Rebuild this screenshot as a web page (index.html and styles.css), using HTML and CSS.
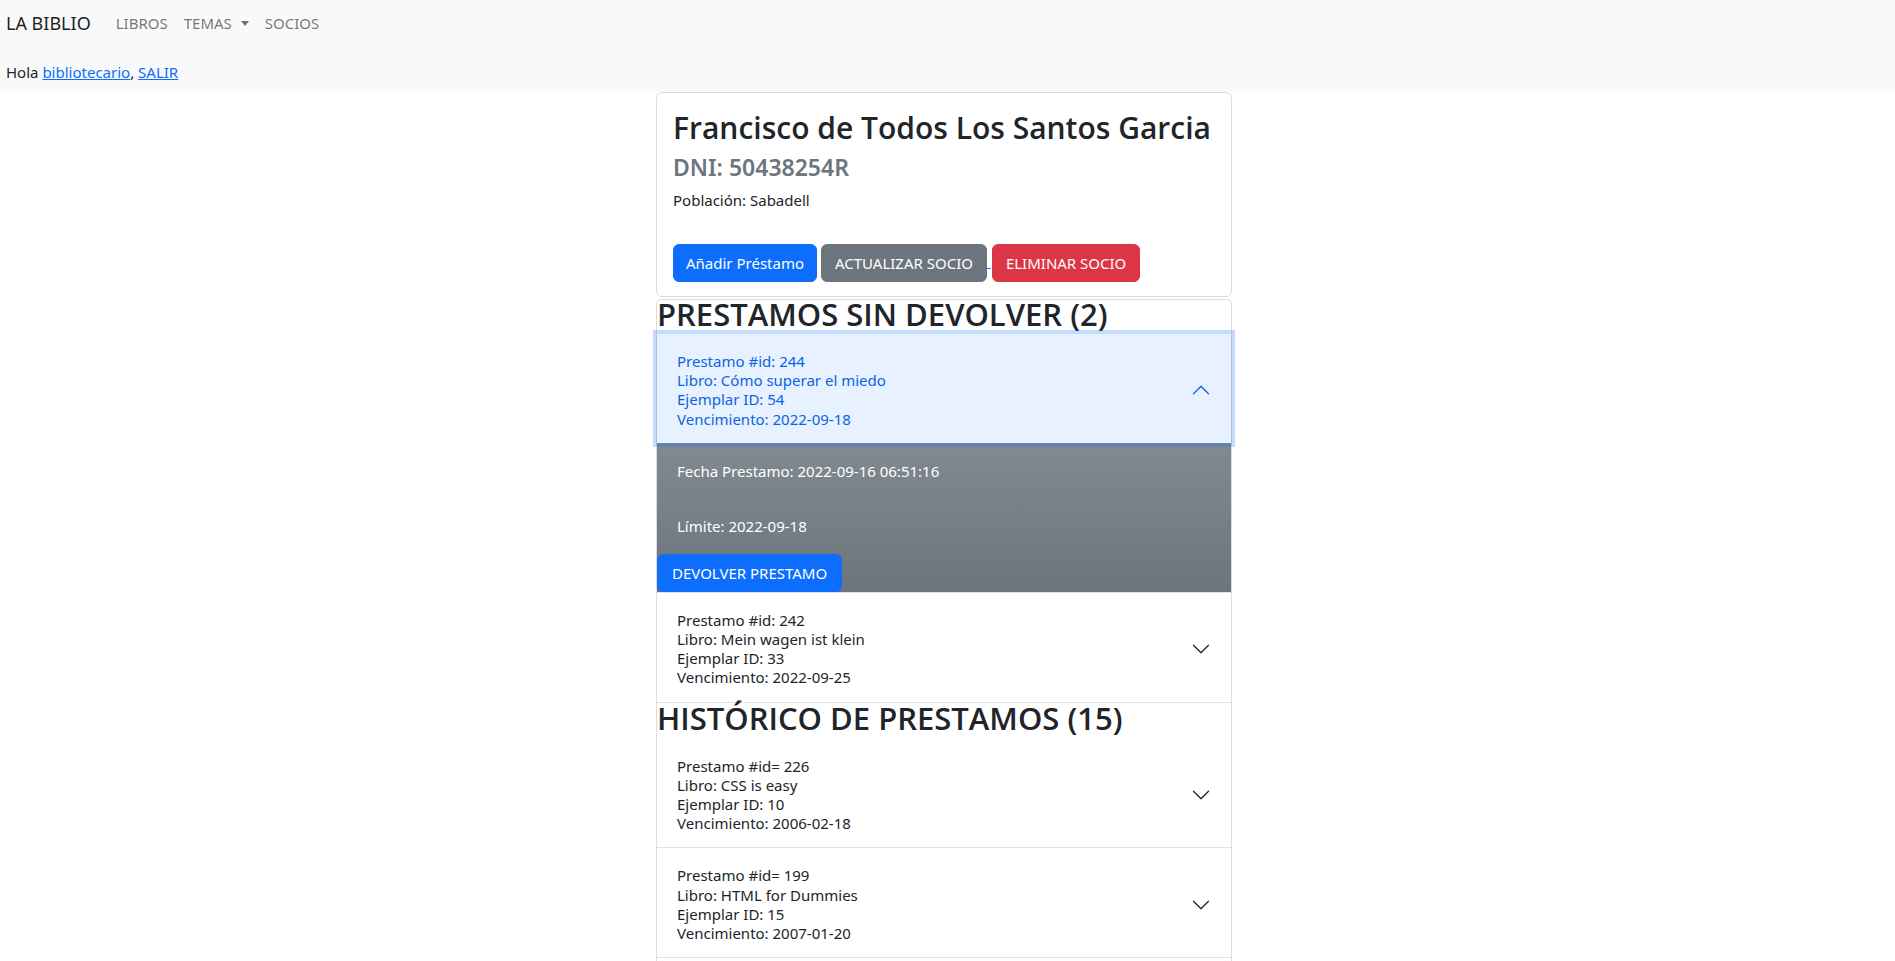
FILE: index.html
```html
<!DOCTYPE html>
<html lang="es">
<head>
<meta charset="utf-8">
<title>La Biblio - Socio</title>
<link rel="stylesheet" href="styles.css">
</head>
<body>
<header class="navbar">
  <div class="nav-row">
    <a class="brand" href="#">LA BIBLIO</a>
    <ul class="nav-links">
      <li><a class="nav-link" href="#">Libros</a></li>
      <li><a class="nav-link dropdown-toggle" href="#">Temas</a></li>
      <li><a class="nav-link" href="#">Socios</a></li>
    </ul>
  </div>
  <div class="greeting">Hola <a href="#">bibliotecario</a>, <a href="#">SALIR</a></div>
</header>

<main class="page">
  <div class="column">
    <section class="card">
      <h2 class="card-title">Francisco de Todos Los Santos Garcia</h2>
      <h4 class="card-subtitle">DNI: 50438254R</h4>
      <p class="card-text">Población: Sabadell</p>
      <div class="actions"><a class="btn btn-primary" href="#">Añadir Préstamo</a> <a class="btn-link" href="#"><span class="btn btn-secondary">ACTUALIZAR SOCIO</span> </a><a class="btn btn-danger" href="#">ELIMINAR SOCIO</a></div>
    </section>

    <section class="loans">
      <h3 class="section-title">PRESTAMOS SIN DEVOLVER (2)</h3>
      <div class="accordion">
        <div class="acc-item">
          <button class="acc-button expanded">
            <span class="acc-text">Prestamo #id: 244<br>Libro: Cómo superar el miedo<br>Ejemplar ID: 54<br>Vencimiento: 2022-09-18</span>
            <svg class="chev" viewBox="0 0 16 16"><path fill-rule="evenodd" d="M1.646 4.646a.5.5 0 0 1 .708 0L8 10.293l5.646-5.647a.5.5 0 0 1 .708.708l-6 6a.5.5 0 0 1-.708 0l-6-6a.5.5 0 0 1 0-.708z"/></svg>
          </button>
          <div class="acc-collapse">
            <div class="acc-body">
              <p class="detail first">Fecha Prestamo: 2022-09-16 06:51:16</p>
              <p class="detail">Límite: 2022-09-18</p>
            </div>
            <a class="btn btn-primary btn-return" href="#">DEVOLVER PRESTAMO</a>
          </div>
        </div>
        <div class="acc-item">
          <button class="acc-button">
            <span class="acc-text">Prestamo #id: 242<br>Libro: Mein wagen ist klein<br>Ejemplar ID: 33<br>Vencimiento: 2022-09-25</span>
            <svg class="chev" viewBox="0 0 16 16"><path fill-rule="evenodd" d="M1.646 4.646a.5.5 0 0 1 .708 0L8 10.293l5.646-5.647a.5.5 0 0 1 .708.708l-6 6a.5.5 0 0 1-.708 0l-6-6a.5.5 0 0 1 0-.708z"/></svg>
          </button>
        </div>
      </div>

      <h3 class="section-title history">HISTÓRICO DE PRESTAMOS (15)</h3>
      <div class="accordion">
        <div class="acc-item">
          <button class="acc-button">
            <span class="acc-text">Prestamo #id= 226<br>Libro: CSS is easy<br>Ejemplar ID: 10<br>Vencimiento: 2006-02-18</span>
            <svg class="chev" viewBox="0 0 16 16"><path fill-rule="evenodd" d="M1.646 4.646a.5.5 0 0 1 .708 0L8 10.293l5.646-5.647a.5.5 0 0 1 .708.708l-6 6a.5.5 0 0 1-.708 0l-6-6a.5.5 0 0 1 0-.708z"/></svg>
          </button>
        </div>
        <div class="acc-item">
          <button class="acc-button">
            <span class="acc-text">Prestamo #id= 199<br>Libro: HTML for Dummies<br>Ejemplar ID: 15<br>Vencimiento: 2007-01-20</span>
            <svg class="chev" viewBox="0 0 16 16"><path fill-rule="evenodd" d="M1.646 4.646a.5.5 0 0 1 .708 0L8 10.293l5.646-5.647a.5.5 0 0 1 .708.708l-6 6a.5.5 0 0 1-.708 0l-6-6a.5.5 0 0 1 0-.708z"/></svg>
          </button>
        </div>
      </div>
    </section>
  </div>
</main>
</body>
</html>
```
FILE: styles.css
```css
* { box-sizing: border-box; }

html, body {
  margin: 0;
  padding: 0;
  background: #fff;
}

body {
  font-family: "Noto Sans", "Open Sans", sans-serif;
  font-size: 15px;
  line-height: 24px;
  color: #212529;
}

a { color: #0d6efd; }

/* ---------- navbar ---------- */
.navbar {
  background: #f8f9fa;
  padding: 8px 5px;
  height: 92px;
}

.nav-row {
  display: flex;
  align-items: center;
  height: 30px;
}

.brand {
  font-size: 18px;
  line-height: 30px;
  color: rgba(0, 0, 0, .9);
  text-decoration: none;
  margin-right: 17px;
  padding-left: 1px;
}

.nav-links {
  display: flex;
  list-style: none;
  margin: 0;
  padding: 0;
}

.nav-link {
  display: block;
  padding: 0 8px;
  font-size: 15px;
  line-height: 30px;
  color: rgba(0, 0, 0, .55);
  text-decoration: none;
  text-transform: uppercase;
}

.dropdown-toggle::after {
  content: "";
  display: inline-block;
  margin-left: 9px;
  vertical-align: 3px;
  border-top: 5px solid;
  border-right: 4.5px solid transparent;
  border-left: 4.5px solid transparent;
  border-bottom: 0;
}

.greeting {
  margin-top: 22px;
  padding-left: 1px;
  line-height: 24px;
}

/* ---------- main column ---------- */
.page {
  display: flex;
  justify-content: center;
  padding-right: 7px;
}

.column {
  width: 576px;
}

.card {
  border: 1px solid #dcdcdd;
  border-radius: 6px;
  padding: 16px;
  background: #fff;
}

.card-title {
  margin: 0 0 6px;
  font-family: "Open Sans", "Noto Sans", sans-serif;
  font-size: 30px;
  font-weight: 600;
  line-height: 38px;
  color: #212529;
  white-space: nowrap;
}

.card-subtitle {
  margin: 0 0 6px;
  font-size: 23px;
  font-weight: 600;
  line-height: 29px;
  color: #6c757d;
}

.card-text {
  margin: 0 0 30px;
}

.actions {
  line-height: 38px;
  height: 38px;
  white-space: nowrap;
}

.btn {
  display: inline-block;
  padding: 6px 12px;
  border: 1px solid transparent;
  border-radius: 6px;
  font-size: 15px;
  line-height: 24px;
  color: #fff;
  text-decoration: none;
  vertical-align: middle;
}

.btn-primary { background: #0d6efd; border-color: #0d6efd; }
.btn-secondary { background: #6c757d; border-color: #6c757d; padding: 6px 13px; }
.btn-danger { background: #dc3545; border-color: #dc3545; padding: 6px 13px; }

.btn-link {
  color: #0d6efd;
  text-decoration: underline;
  padding-right: 1px;
}

/* ---------- loans ---------- */
.loans {
  margin-top: 2px;
  padding-bottom: 40px;
  border: 1px solid #dcdcdd;
  border-bottom: 0;
  border-radius: 6px 6px 0 0;
}

.section-title {
  margin: 0;
  padding-top: 2px;
  padding-bottom: 8px;
  font-family: "Open Sans", "Noto Sans", sans-serif;
  font-size: 31px;
  font-weight: 600;
  line-height: 24px;
  height: 34px;
  color: #212529;
  white-space: nowrap;
}

.section-title.history {
  height: 36px;
  padding-top: 3px;
  padding-bottom: 9px;
}

.acc-item {
  border-bottom: 1px solid #dee2e6;
  background: #fff;
}

.acc-button {
  display: flex;
  align-items: center;
  width: 100%;
  padding: 18px 20px 14px;
  border: 0;
  margin: 0;
  background: #fff;
  color: #212529;
  font-family: inherit;
  font-size: 15px;
  line-height: 19.2px;
  text-align: left;
  cursor: pointer;
}

.acc-text { flex: 1; }

.chev {
  width: 20px;
  height: 20px;
  flex-shrink: 0;
  fill: #212529;
}

.acc-button.expanded {
  position: relative;
  z-index: 3;
  background: #e7f1ff;
  color: #0c63e4;
  box-shadow: 0 0 0 4px rgba(13, 110, 253, .25);
}

.acc-button.expanded .chev {
  fill: #0c63e4;
  transform: rotate(-180deg);
}

.acc-collapse {
  background-color: #6c757d;
  background-image: linear-gradient(180deg, rgba(255, 255, 255, .15), rgba(255, 255, 255, 0));
  color: #fff;
}

.acc-body {
  padding: 16px 20px 0;
}

.detail {
  margin: 0 0 16px;
  line-height: 24px;
}

.detail.first {
  margin-bottom: 31px;
}

.btn-return {
  display: block;
  width: max-content;
  padding: 6px 14px;
}
```
